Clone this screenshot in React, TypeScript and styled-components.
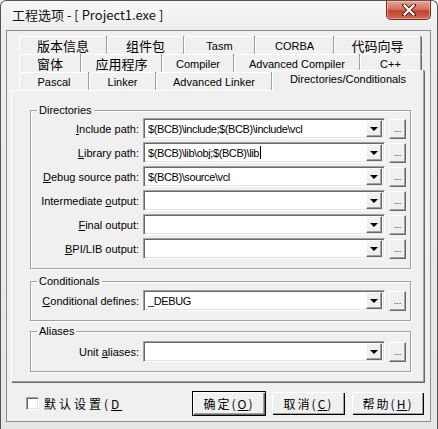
import styled, { createGlobalStyle } from "styled-components";

const GlobalStyle = createGlobalStyle`
  html, body {
    margin: 0;
    padding: 0;
    background: #ffffff;
  }
  body {
    font-family: "Liberation Sans", "Noto Sans CJK SC", sans-serif;
    color: #000000;
  }
`;

const Window = styled.div`
  width: 438px;
  height: 429px;
  box-sizing: border-box;
  border: 1px solid #555555;
  border-bottom: none;
  border-radius: 6px 6px 0 0;
  background: linear-gradient(to bottom, #f7f7f7 0px, #eeeeee 30px, #e6e6e6 100%);
  display: flex;
  flex-direction: column;
  overflow: hidden;
`;

const TitleBar = styled.div`
  height: 29px;
  flex: none;
  display: flex;
  justify-content: space-between;
  align-items: flex-start;
  padding-left: 11px;
`;

const Title = styled.div`
  font-family: "Noto Sans CJK SC", sans-serif;
  font-size: 13px;
  line-height: 28px;
  color: #111111;
`;

const CloseButton = styled.div`
  width: 45px;
  height: 19px;
  margin-right: 6px;
  box-sizing: border-box;
  border: 1px solid #6e2a20;
  border-top: none;
  border-radius: 0 0 5px 5px;
  background: linear-gradient(to bottom, #e8a493 0%, #d6705e 45%, #c24530 55%, #cf6a4f 100%);
  box-shadow: inset 0 0 0 1px rgba(255, 220, 210, 0.5);
  display: flex;
  align-items: center;
  justify-content: center;
`;

const Client = styled.div`
  flex: none;
  margin: 0 6px 0 5px;
  height: 392px;
  box-sizing: border-box;
  border: 1px solid #8c8c8c;
  background: #f0f0f0;
  display: flex;
  flex-direction: column;
  padding: 5px 4px 0 4px;
`;

const PageControl = styled.div`
  display: flex;
  flex-direction: column;
`;

const TabRow = styled.div`
  display: flex;
  height: 18px;
  margin-left: 8px;
`;

const Tab = styled.div<{ $w: number; $active?: boolean; $cjk?: boolean }>`
  flex: none;
  box-sizing: border-box;
  width: ${(p) => p.$w}px;
  height: ${(p) => (p.$active ? 21 : 18)}px;
  margin-top: ${(p) => (p.$active ? -2 : 0)}px;
  border-top: 1px solid #ffffff;
  border-left: 1px solid #ffffff;
  border-right: 1px solid #a0a0a0;
  box-shadow: 1px 0 0 #696969;
  border-radius: 2px 2px 0 0;
  background: #f0f0f0;
  display: flex;
  align-items: ${(p) => (p.$active ? "flex-start" : "center")};
  padding-top: ${(p) => (p.$active ? 2 : 0)}px;
  justify-content: center;
  font-size: ${(p) => (p.$cjk ? 13 : 11)}px;
  font-family: ${(p) =>
    p.$cjk ? '"Noto Sans CJK SC", sans-serif' : '"Liberation Sans", sans-serif'};
  position: relative;
  z-index: ${(p) => (p.$active ? 2 : 1)};
  white-space: nowrap;
`;

const Page = styled.div`
  height: 292px;
  box-sizing: border-box;
  border-top: 1px solid #ffffff;
  border-left: 1px solid #ffffff;
  border-right: 1px solid #a0a0a0;
  border-bottom: 1px solid #a0a0a0;
  box-shadow: 1px 1px 0 #696969;
  width: 413px;
  padding: 19px 12px 0 18px;
  display: flex;
  flex-direction: column;
`;

const Group = styled.div<{ $h: number; $top: number; $pad: number }>`
  position: relative;
  margin-top: ${(p) => p.$top}px;
  height: ${(p) => p.$h}px;
  flex: none;
  box-sizing: border-box;
  border: 1px solid #a0a0a0;
  box-shadow: 1px 1px 0 #ffffff, inset 1px 1px 0 #ffffff;
  padding-top: ${(p) => p.$pad}px;
  display: flex;
  flex-direction: column;
  gap: 3px;
`;

const Caption = styled.span`
  position: absolute;
  top: -7px;
  left: 6px;
  font-size: 11px;
  line-height: 13px;
  padding: 0 2px;
  background: #f0f0f0;
`;

const Row = styled.div`
  display: flex;
  align-items: center;
  height: 21px;
`;

const Label = styled.label`
  width: 108px;
  flex: none;
  text-align: right;
  font-size: 11px;
  padding-right: 4px;
  white-space: nowrap;
`;

const U = styled.span`
  text-decoration: underline;
`;

const Combo = styled.div`
  width: 242px;
  height: 21px;
  flex: none;
  box-sizing: border-box;
  border-top: 1px solid #a0a0a0;
  border-left: 1px solid #a0a0a0;
  border-right: 1px solid #ffffff;
  border-bottom: 1px solid #ffffff;
  box-shadow: inset 1px 1px 0 #696969, inset -1px -1px 0 #e3e3e3;
  background: #ffffff;
  display: flex;
  align-items: center;
  padding: 2px 2px 2px 4px;
`;

const ComboText = styled.div`
  flex: 1;
  font-size: 11px;
  letter-spacing: -0.4px;
  white-space: nowrap;
  overflow: hidden;
  display: flex;
  align-items: center;
`;

const Caret = styled.span`
  display: inline-block;
  width: 1px;
  height: 13px;
  margin-left: 1px;
  background: #000000;
`;

const DropButton = styled.div`
  width: 16px;
  height: 17px;
  flex: none;
  box-sizing: border-box;
  background: #f0f0f0;
  border-top: 1px solid #ffffff;
  border-left: 1px solid #ffffff;
  border-right: 1px solid #696969;
  border-bottom: 1px solid #696969;
  box-shadow: inset -1px -1px 0 #a0a0a0;
  display: flex;
  align-items: center;
  justify-content: center;
`;

const Arrow = styled.span`
  width: 0;
  height: 0;
  border-left: 4px solid transparent;
  border-right: 4px solid transparent;
  border-top: 4px solid #000000;
  margin-top: 1px;
`;

const DotsButton = styled.div`
  width: 17px;
  height: 20px;
  margin-left: 4px;
  flex: none;
  box-sizing: border-box;
  background: #f0f0f0;
  border-top: 1px solid #ffffff;
  border-left: 1px solid #ffffff;
  border-right: 1px solid #696969;
  border-bottom: 1px solid #696969;
  box-shadow: inset -1px -1px 0 #a0a0a0;
  display: flex;
  align-items: flex-end;
  justify-content: center;
  font-size: 9px;
  line-height: 11px;
  padding-bottom: 3px;
  color: #222222;
`;

const Footer = styled.div`
  display: flex;
  align-items: center;
  margin-top: 9px;
  height: 25px;
`;

const CheckWrap = styled.div`
  display: flex;
  align-items: center;
  flex: 1;
  padding-left: 15px;
`;

const CheckBox = styled.span`
  width: 13px;
  height: 13px;
  box-sizing: border-box;
  border-top: 1px solid #a0a0a0;
  border-left: 1px solid #a0a0a0;
  border-right: 1px solid #ffffff;
  border-bottom: 1px solid #ffffff;
  box-shadow: inset 1px 1px 0 #696969, inset -1px -1px 0 #e3e3e3;
  background: #ffffff;
  margin-right: 5px;
`;

const CjkText = styled.span`
  font-family: "Noto Sans CJK SC", sans-serif;
  font-size: 12px;
  letter-spacing: 3px;
`;

const Buttons = styled.div`
  display: flex;
  gap: 5px;
  margin-right: 1px;
`;

const Button = styled.div<{ $default?: boolean; $w: number }>`
  width: ${(p) => p.$w}px;
  height: 25px;
  box-sizing: border-box;
  background: #f0f0f0;
  border: 1px solid ${(p) => (p.$default ? "#000000" : "transparent")};
  box-shadow: ${(p) =>
    p.$default
      ? "inset 1px 1px 0 #ffffff, inset -1px -1px 0 #696969, inset -2px -2px 0 #a0a0a0"
      : "inset 1px 1px 0 #ffffff, inset -1px -1px 0 #000000, inset -2px -2px 0 #a0a0a0"};
  display: flex;
  align-items: center;
  justify-content: center;
  font-family: "Noto Sans CJK SC", sans-serif;
  font-size: 12px;
  letter-spacing: 2px;
`;

type Field = { label: React.ReactNode; value?: React.ReactNode };

const directories: Field[] = [
  { label: <><U>I</U>nclude path:</>, value: "$(BCB)\\include;$(BCB)\\include\\vcl" },
  { label: <><U>L</U>ibrary path:</>, value: <>$(BCB)\lib\obj;$(BCB)\lib<Caret /></> },
  { label: <><U>D</U>ebug source path:</>, value: "$(BCB)\\source\\vcl" },
  { label: <>Intermediate <U>o</U>utput:</> },
  { label: <><U>F</U>inal output:</> },
  { label: <><U>B</U>PI/LIB output:</> },
];

const row1 = [
  { t: "版本信息", w: 88, cjk: true },
  { t: "组件包", w: 77, cjk: true },
  { t: "Tasm", w: 71 },
  { t: "CORBA", w: 79 },
  { t: "代码向导", w: 87, cjk: true },
];

const row2 = [
  { t: "窗体", w: 62, cjk: true },
  { t: "应用程序", w: 81, cjk: true },
  { t: "Compiler", w: 72 },
  { t: "Advanced Compiler", w: 126 },
  { t: "C++", w: 61 },
];

const row3 = [
  { t: "Pascal", w: 70 },
  { t: "Linker", w: 67 },
  { t: "Advanced Linker", w: 116 },
];

const FieldRow = ({ label, value }: Field) => (
  <Row>
    <Label>{label}</Label>
    <Combo>
      <ComboText>{value}</ComboText>
      <DropButton>
        <Arrow />
      </DropButton>
    </Combo>
    <DotsButton>...</DotsButton>
  </Row>
);

const App = () => {
  return (
    <>
      <GlobalStyle />
      <Window>
        <TitleBar>
          <Title>工程选项 - [ Project1.exe ]</Title>
          <CloseButton>
            <svg width="14" height="12" viewBox="0 0 14 12">
              <path
                d="M2 1 L12 11 M12 1 L2 11"
                stroke="#5a1a10"
                strokeWidth="4"
                strokeLinecap="square"
              />
              <path
                d="M2.5 1.5 L11.5 10.5 M11.5 1.5 L2.5 10.5"
                stroke="#ffffff"
                strokeWidth="2.2"
                strokeLinecap="square"
              />
            </svg>
          </CloseButton>
        </TitleBar>
        <Client>
          <PageControl>
            <TabRow>
              {row1.map((t) => (
                <Tab key={t.t} $w={t.w} $cjk={t.cjk}>
                  {t.t}
                </Tab>
              ))}
            </TabRow>
            <TabRow>
              {row2.map((t) => (
                <Tab key={t.t} $w={t.w} $cjk={t.cjk}>
                  {t.t}
                </Tab>
              ))}
            </TabRow>
            <TabRow>
              {row3.map((t) => (
                <Tab key={t.t} $w={t.w}>
                  {t.t}
                </Tab>
              ))}
              <Tab $w={152} $active>
                Directories/Conditionals
              </Tab>
            </TabRow>
            <Page>
              <Group $h={159} $top={0} $pad={7}>
                <Caption>Directories</Caption>
                {directories.map((f, i) => (
                  <FieldRow key={i} label={f.label} value={f.value} />
                ))}
              </Group>
              <Group $h={40} $top={12} $pad={8}>
                <Caption>Conditionals</Caption>
                <FieldRow label={<><U>C</U>onditional defines:</>} value="_DEBUG" />
              </Group>
              <Group $h={41} $top={10} $pad={9}>
                <Caption>Aliases</Caption>
                <FieldRow label={<>Unit <U>a</U>liases:</>} />
              </Group>
            </Page>
          </PageControl>
          <Footer>
            <CheckWrap>
              <CheckBox />
              <CjkText>
                默认设置(<U>D</U>
              </CjkText>
            </CheckWrap>
            <Buttons>
              <Button $default $w={74}>
                确定(<U>O</U>)
              </Button>
              <Button $w={75}>
                取消(<U>C</U>)
              </Button>
              <Button $w={74}>
                帮助(<U>H</U>)
              </Button>
            </Buttons>
          </Footer>
        </Client>
      </Window>
    </>
  );
};

export default App;
